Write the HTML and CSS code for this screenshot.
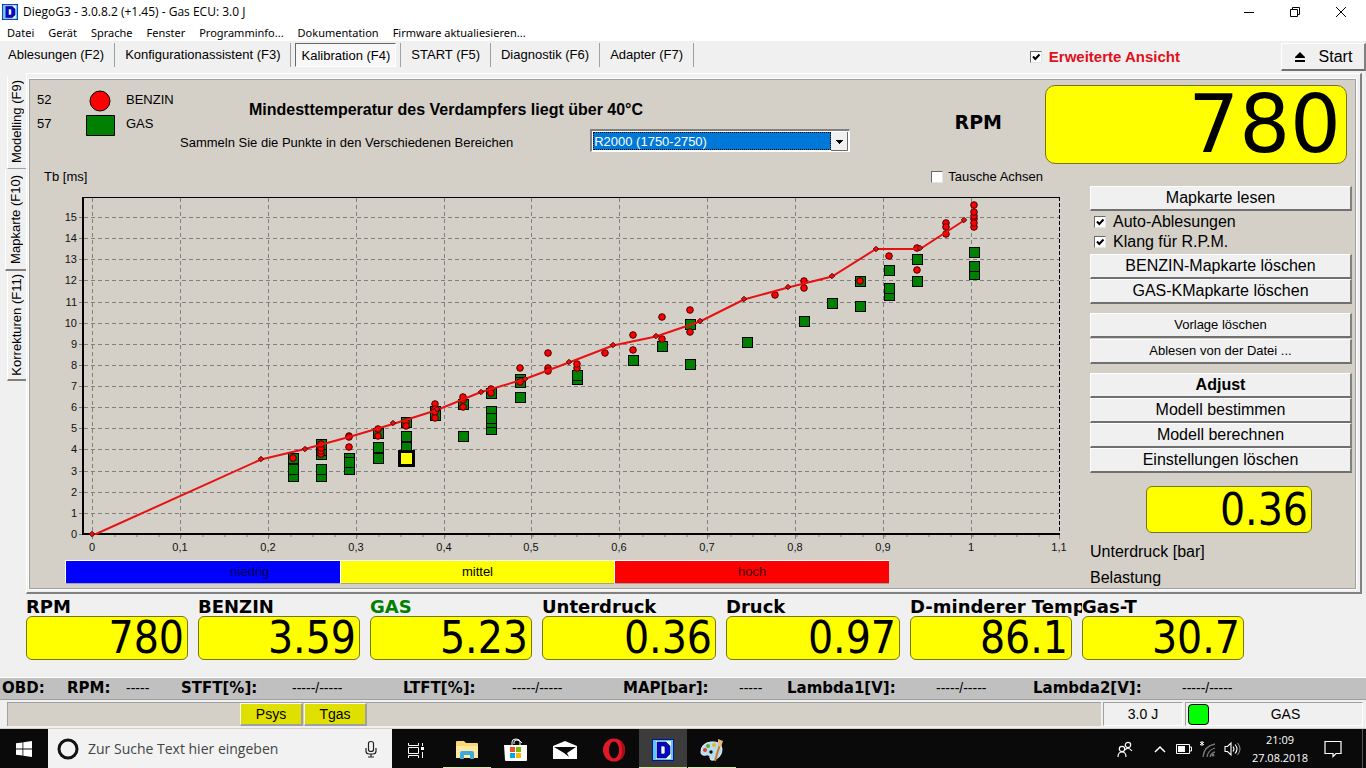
FILE: index.html
```html
<!DOCTYPE html>
<html lang="de">
<head>
<meta charset="utf-8">
<title>DiegoG3 - 3.0.8.2 (+1.45) - Gas ECU: 3.0 J</title>
<link rel="stylesheet" href="styles.css">
</head>
<body>
<svg class="defs" width="0" height="0" aria-hidden="true">
  <symbol id="logo" viewBox="0 0 22 22">
    <rect width="22" height="22" fill="#0010a0"/><rect x="1" y="1" width="20" height="20" fill="#5cc8f4"/><rect x="4" y="2" width="15" height="18" fill="#e8fbff"/>
    <path d="M5 3h9l4 4v8l-4 4H5zM9 7v8h3l1-1V8l-1-1z" fill="#0808c0" fill-rule="evenodd" stroke="#00006a" stroke-width=".6"/>
  </symbol>
</svg>

<header class="titlebar">
  <svg class="app-icon"><use href="#logo"/></svg>
  <h1 class="app-title">DiegoG3 - 3.0.8.2 (+1.45) - Gas ECU: 3.0 J</h1>
  <div class="window-buttons">
    <button aria-label="Minimieren"><svg width="12" height="12" viewBox="0 0 12 12"><path d="M1 6.500h10" stroke="#000" fill="none"/></svg></button>
    <button aria-label="Verkleinern"><svg width="12" height="12" viewBox="0 0 12 12"><path d="M1.500 3.500h7v7h-7zM3.500 3.500v-2h7v7h-2" stroke="#000" fill="none"/></svg></button>
    <button aria-label="Schließen"><svg width="12" height="12" viewBox="0 0 12 12"><path d="M1 1l10 10M11 1L1 11" stroke="#000" fill="none"/></svg></button>
  </div>
</header>
<nav class="menu">
  <a href="#">Datei</a><a href="#">Gerät</a><a href="#">Sprache</a><a href="#">Fenster</a><a href="#">Programminfo...</a><a href="#">Dokumentation</a><a href="#">Firmware aktualiesieren...</a>
</nav>

<div class="toolbar">
  <div class="pages">
    <button>Ablesungen (F2)</button><button>Konfigurationassistent (F3)</button><button class="on"><span>Kalibration (F4)</span></button><button>START (F5)</button><button>Diagnostik (F6)</button><button>Adapter (F7)</button>
  </div>
  <label class="check extended"><input type="checkbox" checked>Erweiterte Ansicht</label>
  <button class="btn start"><svg width="12" height="12" viewBox="0 0 12 12"><path d="M6 1l5 5v1H1V6zM1 9h10v2H1z"/></svg>Start</button>
</div>

<main class="main">
  <nav class="tabs">
    <button><span>Modelling (F9)</span></button>
    <button class="current"><span>Mapkarte (F10)</span></button>
    <button><span>Korrekturen (F11)</span></button>
  </nav>
  <div class="frame"><section class="panel">
    <div class="head">
      <dl class="legend">
        <dt>52</dt><dd><svg width="30" height="24" viewBox="0 0 30 24"><circle cx="15" cy="12" r="10" fill="red" stroke="#000"/></svg>BENZIN</dd>
        <dt>57</dt><dd><svg width="30" height="24" viewBox="0 0 30 24"><path d="M1.500 2.500h28v20h-28z" fill="green" stroke="#000"/></svg>GAS</dd>
      </dl>
      <div class="intro">
        <h2>Mindesttemperatur des Verdampfers liegt über 40°C</h2>
        <div class="range">
          <label for="range">Sammeln Sie die Punkte in den Verschiedenen Bereichen</label>
          <span class="combo"><select id="range"><option>R2000 (1750-2750)</option></select><svg viewBox="0 0 17 19" width="17" height="19"><path d="M0 0h17v19H0z" fill="#f0f0f0"/><path d="M0 18.500h16.500V0" fill="none" stroke="#696969"/><path d="M5 8h7v1h-1v1h-1v1H9v1H8v-1H7v-1H6V9H5z"/></svg></span>
        </div>
      </div>
      <label class="rpm-label" for="rpm">RPM</label>
      <output class="display big" id="rpm">780</output>
    </div>
    <div class="work">
      <div class="plot">
        <div class="plot-head"><span>Tb [ms]</span><label class="check"><input type="checkbox">Tausche Achsen</label></div>
        <svg class="chart" viewBox="30 188 1050 368" role="img" aria-label="Einspritzzeit über Unterdruck">
          <defs>
            <rect id="g" x="-5" y="-5" width="10" height="10" fill="green" stroke="#000"/>
            <circle id="r" r="3.300" fill="red" stroke="#400" stroke-width="1"/>
            <path id="d" d="M-2.700 0L0-2.700 2.700 0 0 2.700z" fill="#f01010" stroke="#500"/>
          </defs>
          <g stroke="#808080" stroke-dasharray="4 3" fill="none">
            <path d="M84 217.500h975M84 238.500h975M84 259.500h975M84 280.500h975M84 302.500h975M84 323.500h975M84 344.500h975M84 365.500h975M84 386.500h975M84 407.500h975M84 428.500h975M84 449.500h975M84 471.500h975M84 492.500h975M84 513.500h975"/>
            <path d="M92.500 198v336M180.500 198v336M268.500 198v336M356.500 198v336M444.500 198v336M531.500 198v336M619.500 198v336M707.500 198v336M795.500 198v336M883.500 198v336M971.500 198v336"/>
          </g>
          <path d="M79 217.500h4M79 238.500h4M79 259.500h4M79 280.500h4M79 302.500h4M79 323.500h4M79 344.500h4M79 365.500h4M79 386.500h4M79 407.500h4M79 428.500h4M79 449.500h4M79 471.500h4M79 492.500h4M79 513.500h4M79 534.500h4M92.500 535v4M180.500 535v4M268.500 535v4M356.500 535v4M444.500 535v4M531.500 535v4M619.500 535v4M707.500 535v4M795.500 535v4M883.500 535v4M971.500 535v4M1059.500 535v4" stroke="#808080"/>
          <path d="M92.500 536h967" stroke="#808080" stroke-width="2" stroke-dasharray="1 21"/>
          <path d="M83 197v337.500" stroke="#000" stroke-width="2"/>
          <path d="M82 197.500h978" stroke="#000"/>
          <path d="M82 534h978" stroke="#000" stroke-width="2"/>
          <path d="M1059.500 197v337" stroke="#000" stroke-dasharray="4 2"/>
          <g class="ticks y-ticks"><text x="77" y="221">15</text><text x="77" y="242">14</text><text x="77" y="263">13</text><text x="77" y="284">12</text><text x="77" y="306">11</text><text x="77" y="327">10</text><text x="77" y="348">9</text><text x="77" y="369">8</text><text x="77" y="390">7</text><text x="77" y="411">6</text><text x="77" y="432">5</text><text x="77" y="453">4</text><text x="77" y="475">3</text><text x="77" y="496">2</text><text x="77" y="517">1</text><text x="77" y="538">0</text></g>
          <g class="ticks x-ticks"><text x="92" y="551">0</text><text x="180" y="551">0,1</text><text x="268" y="551">0,2</text><text x="356" y="551">0,3</text><text x="444" y="551">0,4</text><text x="531" y="551">0,5</text><text x="619" y="551">0,6</text><text x="707" y="551">0,7</text><text x="795" y="551">0,8</text><text x="883" y="551">0,9</text><text x="971" y="551">1</text><text x="1059" y="551">1,1</text></g>
          <g>
            <use href="#g" x="293.500" y="458.500"/><use href="#g" x="293.500" y="476.500"/><use href="#g" x="293.500" y="469.500"/>
            <use href="#g" x="321.500" y="454.500"/><use href="#g" x="321.500" y="450.500"/><use href="#g" x="321.500" y="444.500"/><use href="#g" x="321.500" y="476.500"/><use href="#g" x="321.500" y="469.500"/>
            <use href="#g" x="349.500" y="458.500"/><use href="#g" x="349.500" y="469.500"/><use href="#g" x="349.500" y="462.500"/>
            <use href="#g" x="378.500" y="433.500"/><use href="#g" x="378.500" y="447.500"/><use href="#g" x="378.500" y="458.500"/>
            <use href="#g" x="406.500" y="422.500"/><use href="#g" x="406.500" y="436.500"/><use href="#g" x="406.500" y="447.500"/>
            <use href="#g" x="435.500" y="411.500"/><use href="#g" x="435.500" y="415.500"/>
            <use href="#g" x="463.500" y="404.500"/><use href="#g" x="463.500" y="436.500"/>
            <use href="#g" x="491.500" y="393.500"/><use href="#g" x="491.500" y="411.500"/><use href="#g" x="491.500" y="429.500"/><use href="#g" x="491.500" y="422.500"/><use href="#g" x="491.500" y="418.500"/>
            <use href="#g" x="520.500" y="379.500"/><use href="#g" x="520.500" y="382.500"/><use href="#g" x="520.500" y="397.500"/>
            <use href="#g" x="577.500" y="379.500"/><use href="#g" x="577.500" y="375.500"/>
            <use href="#g" x="633.500" y="360.500"/><use href="#g" x="662.500" y="346.500"/><use href="#g" x="690.500" y="364.500"/><use href="#g" x="690.500" y="324.500"/>
            <use href="#g" x="747.500" y="342.500"/><use href="#g" x="804.500" y="321.500"/><use href="#g" x="832.500" y="303.500"/><use href="#g" x="860.500" y="281.500"/><use href="#g" x="860.500" y="306.500"/>
            <use href="#g" x="889.500" y="270.500"/><use href="#g" x="889.500" y="295.500"/><use href="#g" x="889.500" y="288.500"/><use href="#g" x="917.500" y="259.500"/><use href="#g" x="917.500" y="281.500"/>
            <use href="#g" x="974.500" y="252.500"/><use href="#g" x="974.500" y="274.500"/><use href="#g" x="974.500" y="266.500"/>
          </g>
          <rect x="399.500" y="451.500" width="14" height="14" fill="#ff0" stroke="#000" stroke-width="3"/>
          <g>
            <use href="#r" x="293" y="458"/><use href="#r" x="321" y="454"/><use href="#r" x="321" y="451"/><use href="#r" x="321" y="448"/><use href="#r" x="321" y="444"/>
            <use href="#r" x="349" y="436"/><use href="#r" x="349" y="437"/><use href="#r" x="349" y="447"/><use href="#r" x="378" y="429"/><use href="#r" x="378" y="436"/>
            <use href="#r" x="406" y="422"/><use href="#r" x="406" y="426"/><use href="#r" x="435" y="404"/><use href="#r" x="435" y="409"/><use href="#r" x="435" y="412"/><use href="#r" x="435" y="418"/>
            <use href="#r" x="463" y="400"/><use href="#r" x="463" y="397"/><use href="#r" x="463" y="407"/><use href="#r" x="491" y="389"/><use href="#r" x="491" y="393"/>
            <use href="#r" x="520" y="368"/><use href="#r" x="520" y="382"/><use href="#r" x="548" y="353"/><use href="#r" x="548" y="368"/><use href="#r" x="548" y="371"/><use href="#r" x="577" y="368"/><use href="#r" x="577" y="364"/>
            <use href="#r" x="605" y="353"/><use href="#r" x="633" y="335"/><use href="#r" x="633" y="350"/><use href="#r" x="662" y="317"/><use href="#r" x="662" y="339"/><use href="#r" x="690" y="310"/><use href="#r" x="690" y="332"/>
            <use href="#r" x="775" y="295"/><use href="#r" x="804" y="281"/><use href="#r" x="804" y="288"/><use href="#r" x="860" y="281"/><use href="#r" x="889" y="256"/><use href="#r" x="917" y="248"/><use href="#r" x="917" y="270"/>
            <use href="#r" x="946" y="223"/><use href="#r" x="946" y="227"/><use href="#r" x="946" y="234"/>
            <use href="#r" x="974" y="205"/><use href="#r" x="974" y="219"/><use href="#r" x="974" y="216"/><use href="#r" x="974" y="212"/><use href="#r" x="974" y="227"/><use href="#r" x="974" y="223"/>
          </g>
          <path d="M92 534h4L261 459.500 305 449 349 437 393 424 437 410 481 392 525 379 569 362.500 613 345.500 656 336.500 700 321.500 744 299.500 788 287.500 832 276.500 876 249h44L964 220.500" fill="none" stroke="#e81010" stroke-width="2"/>
          <g>
            <use href="#d" x="92" y="534"/><use href="#d" x="261" y="459"/><use href="#d" x="305" y="449"/><use href="#d" x="393" y="423"/><use href="#d" x="437" y="409"/><use href="#d" x="481" y="392"/><use href="#d" x="525" y="379"/><use href="#d" x="569" y="362"/><use href="#d" x="613" y="345"/><use href="#d" x="656" y="336"/><use href="#d" x="700" y="321"/><use href="#d" x="744" y="299"/><use href="#d" x="788" y="287"/><use href="#d" x="832" y="276"/><use href="#d" x="876" y="249"/><use href="#d" x="920" y="248"/><use href="#d" x="964" y="220"/>
          </g>
        </svg>
        <div class="load"><span class="low">niedrig</span><span class="mid">mittel</span><span class="high">hoch</span></div>
      </div>
      <aside class="side">
        <div class="group"><button class="btn">Mapkarte lesen</button></div>
        <div class="checks">
          <label class="check"><input type="checkbox" checked>Auto-Ablesungen</label>
          <label class="check"><input type="checkbox" checked>Klang für R.P.M.</label>
        </div>
        <div class="group"><button class="btn">BENZIN-Mapkarte löschen</button><button class="btn">GAS-KMapkarte löschen</button></div>
        <div class="group small"><button class="btn">Vorlage löschen</button><button class="btn">Ablesen von der Datei ...</button></div>
        <div class="group"><button class="btn strong">Adjust</button><button class="btn">Modell bestimmen</button><button class="btn">Modell berechnen</button><button class="btn">Einstellungen löschen</button></div>
        <output class="display" id="vacuum">0.36</output>
        <div class="side-labels"><label for="vacuum">Unterdruck [bar]</label><span>Belastung</span></div>
      </aside>
    </div>
  </section></div>
</main>

<section class="gauges">
  <div><label for="g1">RPM</label><output class="display" id="g1">780</output></div>
  <div><label for="g2">BENZIN</label><output class="display" id="g2">3.59</output></div>
  <div><label for="g3" class="gas">GAS</label><output class="display" id="g3">5.23</output></div>
  <div><label for="g4">Unterdruck</label><output class="display" id="g4">0.36</output></div>
  <div><label for="g5">Druck</label><output class="display" id="g5">0.97</output></div>
  <div><label for="g6">D-minderer Temp</label><output class="display" id="g6">86.1</output></div>
  <div><label for="g7">Gas-T</label><output class="display" id="g7">30.7</output></div>
</section>

<section class="obd">
  <b>OBD:</b><b>RPM:</b><span>-----</span><b>STFT[%]:</b><span>-----/-----</span><b>LTFT[%]:</b><span>-----/-----</span><b>MAP[bar]:</b><span>-----</span><b>Lambda1[V]:</b><span>-----/-----</span><b>Lambda2[V]:</b><span>-----/-----</span>
</section>

<footer class="status">
  <div class="sensors"><button>Psys</button><button>Tgas</button></div>
  <div class="cell version">3.0 J</div>
  <div class="cell fuel"><i></i><span>GAS</span></div>
</footer>

<div class="taskbar">
  <button class="win" aria-label="Start"><svg width="16" height="16" viewBox="0 0 16 16"><path d="M0 2.300L6.500 1.400v6.200H0zM7.300 1.300L16 0v7.600H7.300zM0 8.400h6.500v6.200L0 13.700zM7.300 8.400H16V16l-8.700-1.300z" fill="#fff"/></svg></button>
  <label class="search">
    <svg width="24" height="24" viewBox="0 0 24 24"><circle cx="12" cy="12" r="9" fill="none" stroke="#111" stroke-width="3"/></svg>
    <input type="text" placeholder="Zur Suche Text hier eingeben" aria-label="Suche">
    <svg width="14" height="18" viewBox="0 0 14 18"><path d="M4.500 3.500q0-2 2.500-2t2.500 2v6q0 2-2.500 2t-2.500-2zM2 8v3q0 3 3 3h4q3 0 3-3V8M7 14v3M4 17h6" fill="none" stroke="#222" stroke-width="1.200"/></svg>
  </label>
  <div class="tasks">
  <button class="task" aria-label="Taskansicht"><svg width="18" height="18" viewBox="0 0 18 18" fill="none" stroke="#fff"><path d="M1.500 2v2.500h10V2M1.500 6.500h10v6h-10zM1.500 17v-2.500h10V17M15.500 2v3M15.500 11v6"/><path d="M14 6h3v3h-3z" fill="#fff" stroke="none"/></svg></button>
  <button class="task open" aria-label="Explorer"><svg width="22" height="20" viewBox="0 0 22 20"><path d="M0 2q0-1 1-1h7l2 2h11q1 0 1 1v14H0z" fill="#f8d775"/><path d="M0 6h22v12H0z" fill="#ffe9a2"/><path d="M4 19v-6q0-2 2-2h10q2 0 2 2v6h-4v-4H8v4z" fill="#3fa9dc"/></svg></button>
  <button class="task" aria-label="Store"><svg width="24" height="24" viewBox="0 0 24 24"><path d="M8 8V4q0-3 4-3t4 3v4M10 6V4q0-2 3-2t5 3" fill="none" stroke="#fff"/><path d="M0 7h23v15q0 1-1 1H2q-1 0-1-1z" fill="#fff"/><path d="M6 9h5v5H6z" fill="#f25022"/><path d="M12 9h5v5h-5z" fill="#7fba00"/><path d="M6 15h5v5H6z" fill="#00a4ef"/><path d="M12 15h5v5h-5z" fill="#ffb900"/></svg></button>
  <button class="task" aria-label="Mail"><svg width="24" height="20" viewBox="0 0 24 20"><path d="M0 6l12-5 12 5v13H0z" fill="#fff"/><path d="M1 7h22l-9 6 2 4-5-4z" fill="#0a0a0a"/></svg></button>
  <button class="task" aria-label="Opera"><svg width="24" height="24" viewBox="0 0 24 24"><ellipse cx="12" cy="12" rx="11" ry="11.500" fill="#e01828"/><path d="M16 1q7 3 7 11t-7 11q4-3 4-11T16 1" fill="#a50d18"/><ellipse cx="12" cy="12" rx="5" ry="8.500" fill="#0a0a0a"/></svg></button>
  <button class="task open active" aria-label="DiegoG3"><svg width="22" height="22"><use href="#logo"/></svg></button>
  <button class="task open" aria-label="Paint"><svg width="24" height="24" viewBox="0 0 24 24"><path d="M1 14Q1 5 11 4q10-1 11 7 0 8-8 11-4 1-4-2 0-4-4-3-5 1-5-3z" fill="#b5dcef" stroke="#e5f6ff"/><circle cx="5" cy="12" r="2" fill="#d9432e"/><circle cx="8" cy="8" r="2" fill="#5aaa32"/><circle cx="14" cy="7" r="2" fill="#e8b427"/><circle cx="11" cy="14" r="1.700" fill="#0a0a0a"/><path d="M20 6l-5 17" stroke="#c97b2c" stroke-width="2"/><path d="M18 1l5 2-2 6-3-1z" fill="#e6bb82"/></svg></button>
  </div>
  <div class="tray">
    <svg width="16" height="16" viewBox="0 0 16 16" fill="none" stroke="#fff" stroke-width="1.200"><circle cx="11" cy="4" r="2.700"/><circle cx="5" cy="8" r="2.700"/><path d="M1 16q0-5 4-5t4 5M8 9q3-4 7 1"/></svg>
    <svg width="12" height="8" viewBox="0 0 12 8" fill="none" stroke="#fff" stroke-width="1.500"><path d="M1 7l5-5 5 5"/></svg>
    <svg width="16" height="10" viewBox="0 0 16 10"><path d="M.500 .500h13v9H.500zM14 3h1.500v4H14" fill="none" stroke="#fff"/><path d="M2 2h7v6H2z" fill="#fff"/></svg>
    <svg width="18" height="18" viewBox="0 0 18 18" fill="none"><path d="M4 17Q5 6 16 4M8 17q1-7 8-9M11 17q1-4 5-5" stroke="#777" stroke-width="1.300"/><circle cx="14" cy="15" r="1.500" fill="#777"/><path d="M3 1v5M1 2l4 3M5 2L1 5" stroke="#fff"/></svg>
    <svg width="18" height="16" viewBox="0 0 18 16" fill="none" stroke="#fff" stroke-width="1.100"><path d="M1 5.500h2.500L7 2v12l-3.500-3.500H1zM9 5.500q2 2.500 0 5M11 3.500q4 4.500 0 9"/><path d="M13.500 2q5 6 0 12" stroke="#888"/></svg>
    <time datetime="2018-08-27T21:09">21:09<br>27.08.2018</time>
    <svg width="18" height="18" viewBox="0 0 18 18" fill="none" stroke="#fff" stroke-width="1.200"><path d="M1 1.500h16v12h-5l-3 3v-3H1z"/></svg>
  </div>
  <span class="desktop-edge"></span>
</div>
</body>
</html>
```
FILE: styles.css
```css
* { box-sizing: border-box; }
body {
  margin: 0;
  min-height: 100vh;
  display: flex;
  flex-direction: column;
  background: #f0f0f0;
  color: #000;
  font: 13px/18px "Liberation Sans", Arial, sans-serif;
}
button, input, select { font: inherit; color: inherit; margin: 0; }
button { border: 0; padding: 0; background: none; white-space: nowrap; }
svg { display: block; flex: none; }
h1, h2, dl, dd { margin: 0; }
.defs { position: absolute; }

.titlebar {
  display: flex;
  align-items: center;
  gap: 5px;
  height: 24px;
  padding-left: 2px;
  background: #fff;
}
.app-icon { width: 16px; height: 16px; }
.app-title { font: 12px/16px "Open Sans", sans-serif; }
.window-buttons { display: flex; margin-left: auto; padding-right: 2px; }
.window-buttons button { width: 46px; height: 20px; display: grid; place-items: center; }

.menu {
  display: flex;
  gap: 14px;
  height: 17px;
  padding-left: 7px;
  background: #fff;
  font: 11px/17px "Noto Sans", sans-serif;
}
.menu a { color: #000; text-decoration: none; white-space: nowrap; }

.toolbar { display: flex; height: 32px; align-items: flex-start; padding-top: 2px; }
.pages { display: flex; }
.pages button {
  height: 24px;
  padding: 0 10px;
  border-right: 1px solid #a0a0a0;
}
.pages button:first-child { padding-left: 8px; }
.pages .on { padding: 0 4px; }
.pages .on span {
  display: block;
  padding: 3px 5px 1px;
  background: #f8f8f8;
  border: 1px solid #fff;
  border-top-color: #696969;
  border-left-color: #696969;
}
.check { display: flex; align-items: center; gap: 7px; white-space: nowrap; }
.check input {
  appearance: none;
  width: 12px;
  height: 12px;
  background: #fff;
  border: 1px solid #e3e3e3;
  border-top-color: #696969;
  border-left-color: #696969;
}
.check input:checked {
  background: #fff url("data:image/svg+xml,%3Csvg xmlns='http://www.w3.org/2000/svg' viewBox='0 0 10 10'%3E%3Cpath d='M2 4.500l2.300 2.500L8.500 2.500' fill='none' stroke='black' stroke-width='2'/%3E%3C/svg%3E");
}
.extended { margin-left: auto; height: 28px; color: #e0101c; font-size: 15px; font-weight: bold; }
.btn {
  background: #f0f0f0;
  border: 1px solid #fff;
  border-right: 2px solid #808080;
  border-bottom: 2px solid #707070;
}
.start {
  display: flex;
  align-items: center;
  justify-content: center;
  gap: 13px;
  width: 85px;
  height: 28px;
  margin-left: 101px;
  font-size: 16px;
}

.main { flex: 1; display: flex; padding-right: 4px; }
.tabs { width: 26px; padding: 3px 0 0 5px; }
.tabs button {
  display: block;
  width: 19px;
  height: 93px;
  margin-left: 2px;
  border-left: 1px solid #fff;
  border-bottom: 1px solid #a0a0a0;
}
.tabs .current { width: 21px; height: 102px; margin-left: 0; border-bottom: 2px solid #808080; }
.tabs button:last-child { height: 110px; border-bottom: 2px solid #808080; }
.tabs span { display: block; margin: 0 auto; writing-mode: vertical-rl; transform: rotate(180deg); }
.frame {
  flex: 1;
  display: flex;
  padding: 5px 4px 3px 2px;
  border: 1px solid #fff;
  border-right: 2px solid #808080;
  border-bottom: 2px solid #808080;
}
.panel {
  flex: 1;
  min-width: 0;
  background: #d4d0c8;
  border: 1px solid #a0a0a0;
  outline: 1px solid #fff;
}
.head { display: flex; height: 86px; padding: 5px 8px 0 7px; }
.legend { display: grid; grid-template-columns: 48px 1fr; grid-auto-rows: 24px; padding-top: 4px; width: 143px; }
.legend dt, .legend dd { line-height: 22px; }
.legend dd { display: flex; gap: 11px; }
.intro { flex: 1; }
.intro h2 { padding: 15px 0 0 69px; font-size: 16px; line-height: 20px; }
.range { display: flex; align-items: center; padding-top: 9px; gap: 77px; white-space: nowrap; }
.range label { padding-top: 5px; }
.combo {
  display: flex;
  width: 260px;
  height: 23px;
  padding: 1px;
  background: #fff;
  border: 1px solid #fff;
  border-top: 2px solid #808080;
  border-left: 2px solid #808080;
}
.combo select {
  appearance: none;
  flex: 1;
  padding: 0;
  border: 1px dotted #000;
  border-radius: 0;
  background: #0078d7;
  color: #fff;
  line-height: 15px;
}
.rpm-label { padding: 25px 43px 0 0; font: bold 19px/24px "DejaVu Sans", Verdana, sans-serif; }
.display {
  display: flex;
  align-items: center;
  justify-content: flex-end;
  height: 44px;
  padding-right: 3px;
  background: #ff0;
  border: 1px solid #76761a;
  border-radius: 6px;
  font: 44px/42px "DejaVu Sans Condensed", "DejaVu Sans", sans-serif;
}
.big { width: 302px; height: 79px; padding-right: 5px; border-radius: 10px; font: 80px/77px "DejaVu Sans", sans-serif; }

.work { display: flex; justify-content: space-between; }
.plot { flex: 1; min-width: 0; }
.plot-head { display: flex; justify-content: space-between; height: 22px; padding: 0 37px 0 14px; align-items: center; }
.plot-head .check { gap: 5px; }
.chart { width: 100%; height: auto; }
.ticks { font-size: 11px; fill: #111; }
.y-ticks { text-anchor: end; }
.x-ticks { text-anchor: middle; }
.load { display: grid; grid-template-columns: 1fr 1fr 1fr; margin: 4px 191px 4px 35px; line-height: 22px; text-align: center; }
.load span { border: 1px solid #fff; border-right: 0; border-bottom-color: #a0a0a0; }
.load .low { background: #00f; color: #000050; padding-left: 94px; }
.mid { background: #ff0; }
.high { background: #f00; color: #400; }
.side { width: 275px; padding: 20px 3px 0 10px; display: flex; flex-direction: column; font-size: 16px; }
.group { display: grid; margin-bottom: 9px; }
.group .btn { height: 25px; }
.small { gap: 1px; font-size: 13px; }
.strong { font-weight: bold; }
.checks { display: grid; gap: 2px; margin: -7px 0 3px 4px; }
.side .display { width: 166px; height: 47px; margin: 4px 40px 9px 0; align-self: flex-end; }
.side-labels { display: grid; gap: 6px; line-height: 20px; }

.gauges {
  display: grid;
  grid-template-columns: 162fr 162fr 162fr 174fr 174fr 162fr 162fr;
  gap: 10px;
  padding: 3px 122px 17px 26px;
}
.gauges div { min-width: 0; }
.gauges label {
  display: block;
  margin-right: -10px;
  overflow: hidden;
  white-space: nowrap;
  font: bold 18px/19px "DejaVu Sans", Verdana, sans-serif;
}
.gas { color: green; }

.obd {
  display: grid;
  grid-template-columns: 65fr 59fr 55fr 111fr 111fr 109fr 111fr 116fr 48fr 149fr 97fr 149fr 184fr;
  height: 23px;
  padding-left: 2px;
  background: #c0c0c0;
  border-top: 1px solid #fff;
  border-bottom: 1px solid #a0a0a0;
  font-size: 14px;
  line-height: 21px;
  white-space: nowrap;
}
.obd > * { min-width: 0; }
.obd b { font: bold 15px/21px "DejaVu Sans", Verdana, sans-serif; }

.status { display: flex; gap: 2px; height: 29px; padding: 2px 3px 2px 7px; border-bottom: 1px solid #d4d0c8; font-size: 14px; }
.sensors { flex: 1; display: flex; gap: 1px; padding-left: 232px; background: #d4d0c8; border-top: 1px solid #a0a0a0; border-left: 1px solid #a0a0a0; }
.sensors button { width: 63px; height: 23px; background: #e0e000; border: 1px solid #fff; border-right: 2px solid #a0a0a0; border-bottom: 2px solid #a0a0a0; }
.cell { border: 1px solid #fff; border-top-color: #a0a0a0; border-left-color: #a0a0a0; line-height: 22px; text-align: center; }
.version { width: 80px; }
.fuel { display: flex; width: 178px; }
.fuel i { width: 21px; height: 21px; margin: 1px 0 0 2px; background: #0f0; border: 1px solid #000; border-radius: 4px; }
.fuel span { flex: 1; }

.taskbar { display: flex; height: 40px; background: #0a0a0a; color: #fff; }
.win { width: 48px; display: grid; place-items: center; }
.search { display: flex; align-items: center; width: 344px; padding: 0 14px 0 8px; gap: 8px; background: #f2f2f2; }
.search input { flex: 1; min-width: 0; padding: 0; border: 0; background: none; font: 14px/20px "Open Sans", sans-serif; }
.search input::placeholder { color: #444; opacity: 1; }
.tasks { display: flex; gap: 1px; }
.task { width: 48px; display: grid; place-items: center; padding-top: 3px; border-bottom: 2px solid transparent; }
.task:nth-child(n+2) { margin-left: 0; }
.task:first-child { margin-right: 2px; }
.open { border-bottom-color: #d5eb9c; background-clip: padding-box; }
.active { background-color: #3c3c3c; }
.tray { display: flex; align-items: center; gap: 10px; margin-left: auto; padding-right: 20px; font: 11px/18px "Open Sans", sans-serif; text-align: center; }
.tray svg { margin-right: -3px; }
.tray svg:first-child { margin-right: 11px; }
.tray svg:nth-child(2) { margin-right: 0; }
.tray time { margin-left: 3px; }
.tray svg:last-child { margin: 0 0 0 6px; }
.desktop-edge { width: 4px; border-left: 1px solid #555; }
```
